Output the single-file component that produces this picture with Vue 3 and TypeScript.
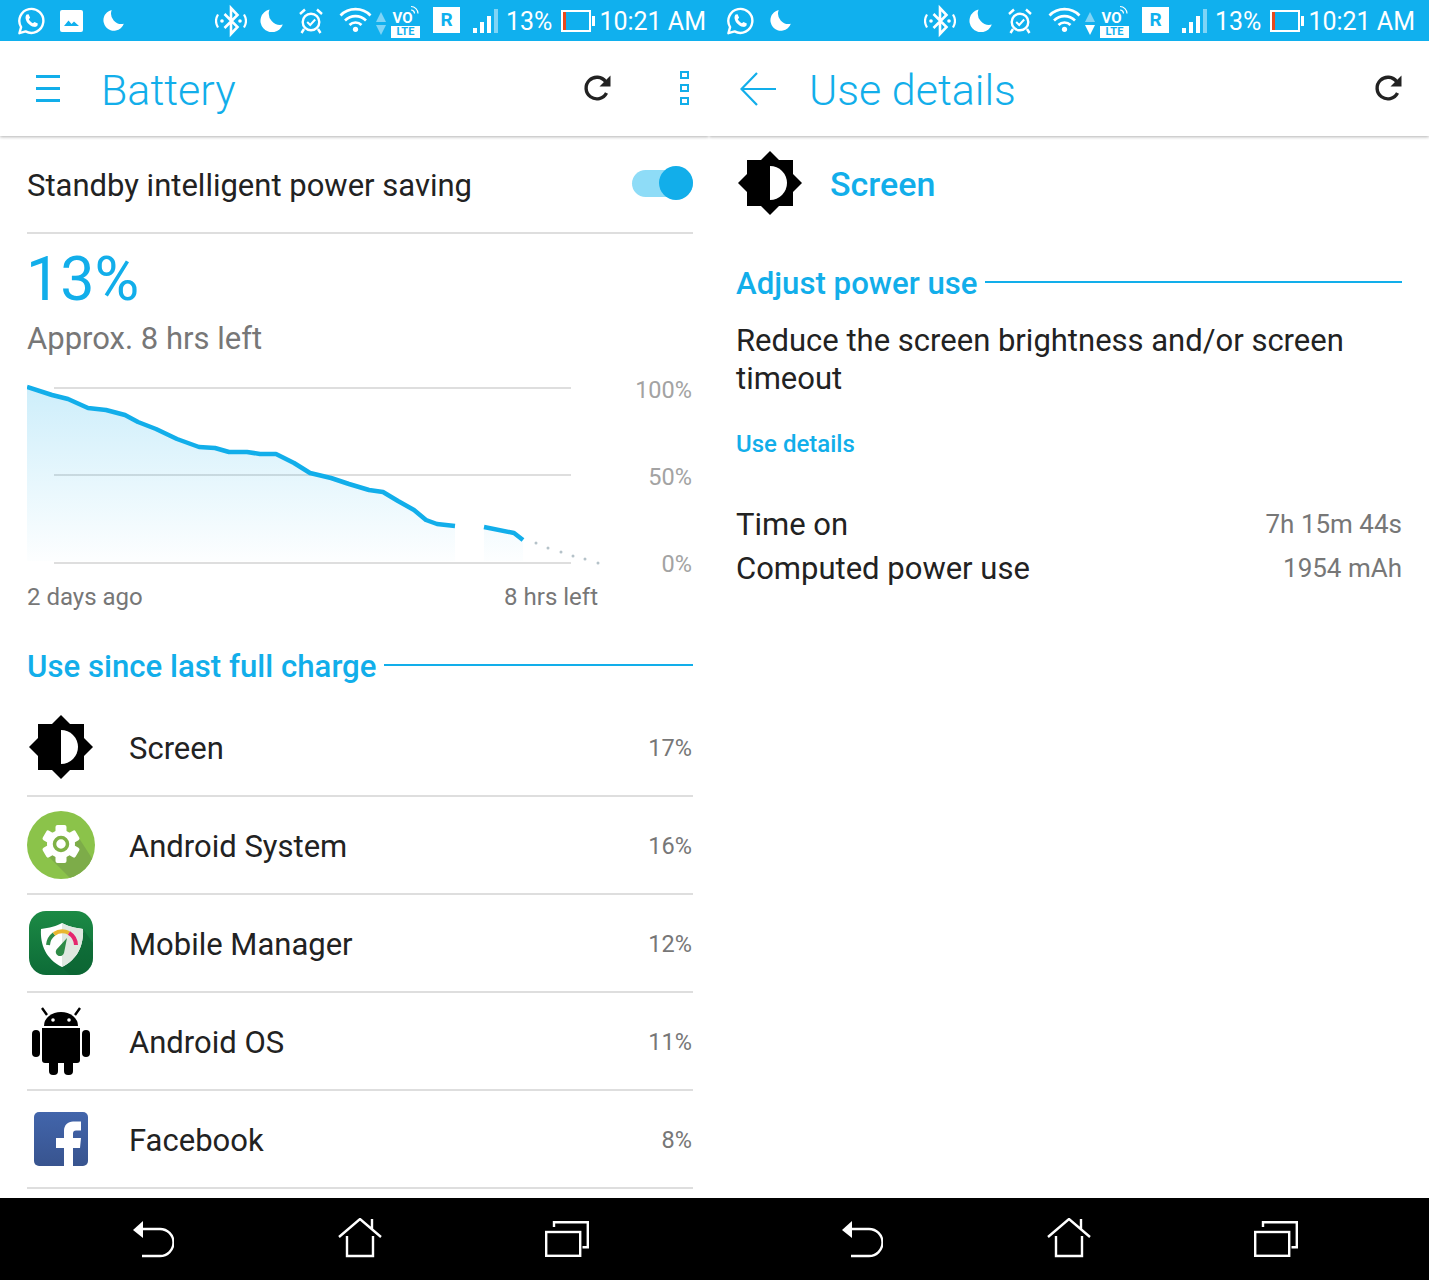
<script setup lang="ts">
interface UseRow {
  icon: string
  name: string
  pct: string
}

interface Panel {
  id: string
  title: string
  leading: string
  firstIcons: string[]
  downArrow: boolean
}

const panels: Panel[] = [
  { id: 'battery', title: 'Battery', leading: 'menu', firstIcons: ['whatsapp', 'image', 'moon'], downArrow: false },
  { id: 'details', title: 'Use details', leading: 'back', firstIcons: ['whatsapp', 'moon'], downArrow: true }
]

const rows: UseRow[] = [
  { icon: 'brightness', name: 'Screen', pct: '17%' },
  { icon: 'system', name: 'Android System', pct: '16%' },
  { icon: 'manager', name: 'Mobile Manager', pct: '12%' },
  { icon: 'droid', name: 'Android OS', pct: '11%' },
  { icon: 'facebook', name: 'Facebook', pct: '8%' }
]

// battery curve, in px of the chart box
const part1: [number, number][] = [
  [0, 7], [25, 15], [41, 19], [61, 28], [79, 30], [98, 35], [111, 42], [129, 49], [150, 59], [172, 67],
  [188, 68], [202, 72], [220, 72], [233, 74], [249, 74], [267, 83], [283, 93], [304, 98], [322, 104],
  [342, 110], [356, 112], [371, 121], [387, 130], [399, 140], [410, 144], [428, 146]
]
const part2: [number, number][] = [[457, 147], [487, 153], [496, 160]]
const dots: [number, number][] = [[509, 163], [521, 168], [534, 172], [546, 176], [558, 179], [571, 183]]

const toLine = (pts: [number, number][]) => pts.map((p) => p.join(',')).join(' ')
const toArea = (pts: [number, number][]) =>
  `${pts[0][0]},181 ${toLine(pts)} ${pts[pts.length - 1][0]},181`
</script>

<template>
  <svg class="defs" width="0" height="0" aria-hidden="true">
    <symbol id="whatsapp" viewBox="0 0 28 28">
      <path d="M2.4 26.2l1.7-6.1A12 12 0 1 1 8.6 24.4z" fill="none" stroke="#fff" stroke-width="2.4" stroke-linejoin="round" />
      <path d="M9.6 7.6l2-.3 1.5 3.4-1.3 1.6c.9 1.8 2.2 3.1 4.1 4l1.6-1.4 3.3 1.6-.3 2c-.7 1.2-2.2 1.7-3.6 1.3-4.2-1.1-7.5-4.3-8.3-8.4-.2-1.5.2-2.9 1-3.8z" fill="#fff" />
    </symbol>
    <symbol id="image" viewBox="0 0 23 22">
      <rect width="23" height="22" rx="2" fill="#fff" />
      <path d="M4 16l4.5-5.5 3 3.5 2.5-2.5L19 16z" fill="#10b0ee" />
    </symbol>
    <symbol id="moon" viewBox="0 0 23 23">
      <path d="M9.5.5A11.5 11.5 0 1 0 22.8 15.6 11.5 11.5 0 0 1 9.5.5z" fill="#fff" />
    </symbol>
    <symbol id="bt" viewBox="0 0 32 34">
      <path d="M9.5 10l13 13-6.5 7V4l6.5 7-13 13" fill="none" stroke="#fff" stroke-width="2.6" />
      <circle cx="7" cy="17" r="1.8" fill="#fff" />
      <circle cx="25" cy="17" r="1.8" fill="#fff" />
      <path d="M3 10.500q-4 6.500 0 13M29 10.500q4 6.500 0 13" fill="none" stroke="#fff" stroke-width="2.200" />
    </symbol>
    <symbol id="alarm" viewBox="0 0 24 26">
      <circle cx="12" cy="14" r="8.300" fill="none" stroke="#fff" stroke-width="2.400" />
      <path d="M8.200 14l3 3 5-5.500" fill="none" stroke="#fff" stroke-width="2" />
      <path d="M1 6l5-4.500M23 6l-5-4.500M5 21l-2.500 4M19 21l2.500 4" fill="none" stroke="#fff" stroke-width="2.400" />
    </symbol>
    <symbol id="wifi" viewBox="0 0 33 25">
      <path d="M1.500 8.500a21 21 0 0 1 30 0M6 13.500a15 15 0 0 1 21 0M10.500 18a8.500 8.500 0 0 1 12 0" fill="none" stroke="#fff" stroke-width="2.700" />
      <circle cx="16.500" cy="22.300" r="2.600" fill="#fff" />
    </symbol>
    <symbol id="refresh" viewBox="0 0 28 28">
      <path d="M22.500 19a10.800 10.800 0 1 1-.8-11.200" fill="none" stroke="#222" stroke-width="3.400" />
      <path d="M26.500 1.500v11h-11z" fill="#222" />
    </symbol>
    <symbol id="navBack" viewBox="0 0 42 38">
      <path d="M1 10l10-9v17z" fill="#fff" />
      <path d="M10 9h18a13.500 13.500 0 0 1 0 27H10" fill="none" stroke="#fff" stroke-width="2.400" />
    </symbol>
    <symbol id="navHome" viewBox="0 0 44 40">
      <path d="M1 19L22 1l21 18M34 1v11M9 18v20h26V18" fill="none" stroke="#fff" stroke-width="2.400" />
    </symbol>
    <symbol id="navRecent" viewBox="0 0 44 36">
      <rect x="1.200" y="11" width="34" height="23.800" fill="none" stroke="#fff" stroke-width="2.400" />
      <path d="M9 6V1.200h33.800v25H37.500" fill="none" stroke="#fff" stroke-width="2.400" />
    </symbol>
    <symbol id="brightness" viewBox="0 0 64 64">
      <rect x="9" y="9" width="46" height="46" fill="#000" />
      <path d="M32 0l32 32-32 32L0 32z" fill="#000" />
      <path d="M32 15a17 17 0 0 1 0 34z" fill="#fff" />
    </symbol>
    <symbol id="system" viewBox="0 0 68 68">
      <defs>
        <clipPath id="sysClip"><circle cx="34" cy="34" r="34" /></clipPath>
      </defs>
      <circle cx="34" cy="34" r="34" fill="#8bc34a" />
      <path d="M20 44l30-20 18 28v16H44z" fill="#7dac49" clip-path="url(#sysClip)" />
      <g fill="#fff">
        <circle cx="34" cy="33" r="14" />
        <rect x="28.500" y="14" width="11" height="38" rx="2" />
        <rect x="28.500" y="14" width="11" height="38" rx="2" transform="rotate(60 34 33)" />
        <rect x="28.500" y="14" width="11" height="38" rx="2" transform="rotate(120 34 33)" />
      </g>
      <circle cx="34" cy="33" r="6.500" fill="#fff" stroke="#7fb245" stroke-width="3.500" />
    </symbol>
    <symbol id="manager" viewBox="0 0 64 64">
      <defs>
        <linearGradient id="mmBg" x1="0" y1="0" x2="0" y2="1">
          <stop offset="0" stop-color="#1c8a45" />
          <stop offset="1" stop-color="#0d6b37" />
        </linearGradient>
      </defs>
      <rect width="64" height="64" rx="17" fill="url(#mmBg)" />
      <path d="M33 56L54 18l10 14v15a17 17 0 0 1-17 17H41z" fill="#0b5f31" opacity="0.45" />
      <path d="M33 12c5 3 13 5 21 6 .8 16-5 30-21 38C17 48 11 34 12 18c8-1 16-3 21-6z" fill="#fff" />
      <path d="M33 12c5 3 13 5 21 6 .8 16-5 30-21 38z" fill="#dfe8e0" />
      <path d="M19 34a15 15 0 0 1 6-11" fill="none" stroke="#2e8b47" stroke-width="4" />
      <path d="M25 23a15 15 0 0 1 15-1" fill="none" stroke="#e8b730" stroke-width="4" />
      <path d="M40 22a15 15 0 0 1 7 12" fill="none" stroke="#e5266e" stroke-width="4" />
      <path d="M38 27l-3 15a4.200 4.200 0 1 1-7.500-3.500z" fill="#2e8b47" />
    </symbol>
    <symbol id="droid" viewBox="0 0 58 68">
      <g fill="#000">
        <path d="M12 19a17 14 0 0 1 34 0z" />
        <path d="M15 8L10 1M43 8l5-7" stroke="#000" stroke-width="2.400" />
        <path d="M10 21h38v32a3 3 0 0 1-3 3H13a3 3 0 0 1-3-3z" />
        <rect x="0" y="23" width="8" height="27" rx="4" />
        <rect x="50" y="23" width="8" height="27" rx="4" />
        <rect x="17" y="50" width="9" height="18" rx="4" />
        <rect x="32" y="50" width="9" height="18" rx="4" />
      </g>
      <circle cx="21" cy="13" r="1.800" fill="#fff" />
      <circle cx="37" cy="13" r="1.800" fill="#fff" />
    </symbol>
    <symbol id="facebook" viewBox="0 0 54 54">
      <defs>
        <linearGradient id="fbBg" x1="0" y1="0" x2="0" y2="1">
          <stop offset="0" stop-color="#4265ab" />
          <stop offset="1" stop-color="#38548f" />
        </linearGradient>
      </defs>
      <rect width="54" height="54" rx="5" fill="url(#fbBg)" />
      <path d="M30 54V36h-8V26h8v-7c0-6 4-9.500 9-9.500h8v9h-5c-2 0-3 1-3 3V26h8l-1 10h-7v18z" fill="#fff" />
    </symbol>
  </svg>

  <div class="screen">
    <section v-for="p in panels" :key="p.id" class="panel" :class="'panel-' + p.id">
      <div class="status">
        <svg v-for="ic in p.firstIcons" :key="ic" class="st" :class="'st-' + ic"><use :href="'#' + ic" /></svg>
        <div class="status-right">
          <svg class="st st-bt"><use href="#bt" /></svg>
          <svg class="st st-moon2"><use href="#moon" /></svg>
          <svg class="st st-alarm"><use href="#alarm" /></svg>
          <svg class="st st-wifi"><use href="#wifi" /></svg>
          <div class="arrows">
            <i class="arrow-up"></i>
            <i class="arrow-down" :class="{ solid: p.downArrow }"></i>
          </div>
          <div class="volte">
            <svg class="vo-waves" viewBox="0 0 10 10">
              <path d="M1 1.500a7 7 0 0 1 7 7M1 5a3.500 3.500 0 0 1 3.500 3.500" fill="none" stroke="#fff" stroke-width="1.200" />
            </svg>
            <span class="vo">VO</span>
            <span class="lte">LTE</span>
          </div>
          <div class="roam">R</div>
          <div class="signal"><i></i><i></i><i></i><i></i></div>
          <span class="st-text pct">13%</span>
          <div class="batt"><i></i></div>
          <span class="st-text clock">10:21 AM</span>
        </div>
      </div>

      <header class="bar">
        <div v-if="p.leading === 'menu'" class="menu"><i></i><i></i><i></i></div>
        <svg v-else class="back" viewBox="0 0 36 34">
          <path d="M17 1L1.500 17 17 33M2 17h34" fill="none" stroke="#12aeea" stroke-width="2.200" />
        </svg>
        <h1 class="bar-title">{{ p.title }}</h1>
        <svg class="refresh"><use href="#refresh" /></svg>
        <div v-if="p.id === 'battery'" class="more"><i></i><i></i><i></i></div>
      </header>

      <main v-if="p.id === 'battery'" class="body">
        <div class="standby">
          <span>Standby intelligent power saving</span>
          <div class="toggle"><i></i></div>
        </div>
        <div class="big">13%</div>
        <div class="approx">Approx. 8 hrs left</div>

        <div class="chart">
          <svg class="plot" width="574" height="190" viewBox="0 0 574 190">
            <defs>
              <linearGradient id="area" gradientUnits="userSpaceOnUse" x1="0" y1="7" x2="0" y2="181">
                <stop offset="0" stop-color="#12aeea" stop-opacity="0.21" />
                <stop offset="1" stop-color="#12aeea" stop-opacity="0.01" />
              </linearGradient>
            </defs>
            <g stroke="#dedede" stroke-width="2">
              <line x1="27" y1="8" x2="544" y2="8" />
              <line x1="27" y1="95" x2="544" y2="95" />
              <line x1="27" y1="183" x2="544" y2="183" />
            </g>
            <polygon :points="toArea(part1)" fill="url(#area)" />
            <polygon :points="toArea(part2)" fill="url(#area)" />
            <polyline :points="toLine(part1)" fill="none" stroke="#12aeea" stroke-width="4.500" stroke-linejoin="round" />
            <polyline :points="toLine(part2)" fill="none" stroke="#12aeea" stroke-width="4.500" stroke-linejoin="round" />
            <circle v-for="d in dots" :key="d[0]" :cx="d[0]" :cy="d[1]" r="1.500" fill="#b5c2c9" />
          </svg>
          <div class="ticks">
            <span>100%</span>
            <span>50%</span>
            <span>0%</span>
          </div>
        </div>
        <div class="axis">
          <span>2 days ago</span>
          <span>8 hrs left</span>
        </div>

        <div class="section use-since">
          <span>Use since last full charge</span>
          <i></i>
        </div>

        <ul class="list">
          <li v-for="r in rows" :key="r.name" class="row">
            <div class="row-icon">
              <svg :class="'ic-' + r.icon"><use :href="'#' + r.icon" /></svg>
            </div>
            <span class="row-name">{{ r.name }}</span>
            <span class="row-pct">{{ r.pct }}</span>
          </li>
        </ul>
      </main>

      <main v-else class="body">
        <div class="app-head">
          <svg class="ic-brightness"><use href="#brightness" /></svg>
          <span>Screen</span>
        </div>
        <div class="section adjust">
          <span>Adjust power use</span>
          <i></i>
        </div>
        <p class="advice">Reduce the screen brightness and/or screen timeout</p>
        <div class="link">Use details</div>
        <div class="stat stat-first">
          <span>Time on</span>
          <b>7h 15m 44s</b>
        </div>
        <div class="stat">
          <span>Computed power use</span>
          <b>1954 mAh</b>
        </div>
      </main>

      <footer class="nav">
        <svg class="nav-back"><use href="#navBack" /></svg>
        <svg class="nav-home"><use href="#navHome" /></svg>
        <svg class="nav-recent"><use href="#navRecent" /></svg>
      </footer>
    </section>
  </div>
</template>

<style>
html,
body {
  margin: 0;
  background: #fff;
}
</style>

<style scoped>
.defs {
  position: absolute;
}

.screen {
  display: grid;
  grid-template-columns: 709px 720px;
  height: 1280px;
  overflow: hidden;
  font-family: Roboto, "Liberation Sans", sans-serif;
  color: #222;
}

.panel {
  display: flex;
  flex-direction: column;
  height: 1280px;
  min-width: 0;
}

/* status bar */
.status {
  display: flex;
  align-items: center;
  flex: none;
  height: 41px;
  padding: 0 3px 0 17px;
  background: #10b0ee;
  color: #fff;
}

.panel-details .status {
  padding-right: 14px;
}

.status-right {
  display: flex;
  align-items: center;
  margin-left: auto;
}

.st {
  display: block;
  flex: none;
}

.st-whatsapp {
  width: 28px;
  height: 28px;
}

.st-image {
  width: 23px;
  height: 22px;
  margin-left: 15px;
}

.st-moon {
  width: 21px;
  height: 22px;
  margin-left: 20px;
  margin-top: -2px;
}

.panel-details .st-moon {
  margin-left: 16px;
}

.st-bt {
  width: 32px;
  height: 34px;
}

.st-moon2 {
  width: 23px;
  height: 23px;
  margin-left: 13px;
}

.st-alarm {
  width: 24px;
  height: 26px;
  margin-left: 16px;
}

.st-wifi {
  width: 33px;
  height: 25px;
  margin-left: 16px;
  margin-top: -2px;
}

.arrows {
  display: flex;
  flex-direction: column;
  gap: 3px;
  margin-left: 4px;
  margin-top: 6px;
}

.arrow-up,
.arrow-down {
  display: block;
  width: 0;
  height: 0;
  border-left: 5px solid transparent;
  border-right: 5px solid transparent;
}

.arrow-up {
  border-bottom: 10px solid #7fd4f6;
}

.arrow-down {
  border-top: 10px solid #7fd4f6;
}

.arrow-down.solid {
  border-top-color: #fff;
}

.volte {
  position: relative;
  display: flex;
  flex-direction: column;
  align-items: center;
  width: 29px;
  margin-left: 5px;
  margin-top: 8px;
}

.vo-waves {
  position: absolute;
  top: -6px;
  right: 0;
  width: 10px;
  height: 10px;
}

.vo {
  font-size: 15px;
  font-weight: 700;
  line-height: 15px;
  margin-left: -6px;
}

.lte {
  width: 100%;
  height: 12px;
  background: #fff;
  color: #10b0ee;
  font-size: 11px;
  font-weight: 700;
  line-height: 12px;
  text-align: center;
}

.roam {
  width: 27px;
  height: 26px;
  margin-left: 13px;
  margin-top: -1px;
  background: #fff;
  color: #10b0ee;
  font-size: 19px;
  font-weight: 700;
  line-height: 26px;
  text-align: center;
}

.signal {
  display: flex;
  align-items: flex-end;
  gap: 3px;
  height: 24px;
  margin-left: 13px;
}

.signal i {
  display: block;
  width: 4px;
  background: #fff;
}

.signal i:nth-child(1) {
  height: 5px;
}

.signal i:nth-child(2) {
  height: 11px;
}

.signal i:nth-child(3) {
  height: 17px;
}

.signal i:nth-child(4) {
  height: 24px;
  background: #7fd4f6;
}

.st-text {
  margin-top: 1px;
  font-size: 25px;
  line-height: 41px;
}

.pct {
  margin-left: 8px;
}

.batt {
  position: relative;
  box-sizing: border-box;
  width: 30px;
  height: 22px;
  margin: 0 4px 0 9px;
  border: 2px solid #fff;
}

.batt i {
  display: block;
  width: 3px;
  height: 100%;
  background: #e8491d;
}

.batt::after {
  content: "";
  position: absolute;
  top: 4px;
  right: -6px;
  width: 3px;
  height: 10px;
  background: #fff;
}

.clock {
  margin-left: 4px;
}

/* toolbar */
.bar {
  display: flex;
  align-items: center;
  flex: none;
  position: relative;
  z-index: 1;
  height: 95px;
  background: #fff;
  box-shadow: 0 1px 3px rgba(0, 0, 0, 0.3);
  clip-path: inset(0 0 -6px 0);
}

.menu {
  display: flex;
  flex-direction: column;
  gap: 9px;
  width: 24px;
  margin-left: 36px;
}

.menu i {
  display: block;
  height: 3px;
  background: #12aeea;
}

.back {
  width: 36px;
  height: 34px;
  margin-left: 31px;
}

.bar-title {
  margin: 2px 0 0;
  font-size: 43px;
  font-weight: 300;
  color: #12aeea;
}

.panel-battery .bar-title {
  margin-left: 41px;
}

.panel-details .bar-title {
  margin-left: 33px;
}

.refresh {
  width: 28px;
  height: 28px;
  margin-left: auto;
  margin-top: -2px;
}

.panel-details .refresh {
  margin-right: 26px;
}

.more {
  display: flex;
  flex-direction: column;
  gap: 5px;
  margin: -2px 20px 0 68px;
}

.more i {
  display: block;
  box-sizing: border-box;
  width: 9px;
  height: 8px;
  border: 2.5px solid #12aeea;
}

/* content */
.body {
  flex: 1;
  min-height: 0;
  overflow: hidden;
  background: #fff;
}

.panel-battery .body {
  padding: 0 16px 0 27px;
}

.panel-details .body {
  padding: 0 27px;
}

.standby {
  display: flex;
  align-items: center;
  justify-content: space-between;
  box-sizing: border-box;
  height: 98px;
  border-bottom: 2px solid #dedede;
  font-size: 31px;
}

.standby span {
  margin-top: 2px;
}

.toggle {
  position: relative;
  width: 61px;
  height: 27px;
  margin-top: -2px;
  border-radius: 14px;
  background: #8edcf7;
}

.toggle i {
  position: absolute;
  top: -4px;
  right: 0;
  width: 34px;
  height: 34px;
  border-radius: 50%;
  background: #12aeea;
}

.big {
  margin-top: 8px;
  margin-left: -1px;
  font-size: 61px;
  font-weight: 400;
  line-height: 74px;
  color: #12aeea;
}

.approx {
  margin-top: 3px;
  font-size: 31px;
  line-height: 40px;
  color: #777;
}

.chart {
  display: flex;
  justify-content: space-between;
  height: 190px;
  margin-top: 21px;
}

.plot {
  display: block;
}

.ticks {
  display: flex;
  flex-direction: column;
  justify-content: space-between;
  height: 198px;
  margin: -2px 1px 0 0;
  font-size: 23.5px;
  line-height: 24px;
  text-align: right;
  color: #a3a3a3;
}

.axis {
  display: flex;
  justify-content: space-between;
  width: 571px;
  margin-top: 12px;
  font-size: 24px;
  line-height: 30px;
  color: #777;
}

.section {
  display: flex;
  align-items: center;
  gap: 7px;
  font-size: 31.2px;
  font-weight: 500;
  line-height: 40px;
  color: #12aeea;
}

.section i {
  flex: 1;
  height: 2px;
  margin-top: -4px;
  background: #12aeea;
}

.use-since {
  margin-top: 35px;
}

.list {
  margin: 12px 0 0;
  padding: 0;
  list-style: none;
}

.row {
  display: flex;
  align-items: center;
  box-sizing: border-box;
  height: 98px;
  border-bottom: 2px solid #dedede;
}

.row-icon {
  display: flex;
  align-items: center;
  justify-content: center;
  flex: none;
  width: 68px;
  margin-right: 34px;
}

.row-name {
  padding-top: 2px;
  font-size: 31px;
}

.row-pct {
  margin: 0 1px 0 auto;
  padding-top: 2px;
  font-size: 23.5px;
  color: #777;
}

.ic-brightness {
  display: block;
  width: 64px;
  height: 64px;
}

.ic-system {
  width: 68px;
  height: 68px;
}

.ic-manager {
  width: 64px;
  height: 64px;
}

.ic-droid {
  width: 58px;
  height: 68px;
}

.ic-facebook {
  width: 54px;
  height: 54px;
}

.app-head {
  display: flex;
  align-items: center;
  gap: 28px;
  height: 94px;
  padding-left: 2px;
  font-size: 34px;
  font-weight: 500;
  color: #12aeea;
}

.app-head span {
  margin-top: 2px;
}

.adjust {
  margin-top: 34px;
}

.advice {
  margin: 18px 0 0;
  font-size: 31px;
  line-height: 38px;
}

.link {
  margin-top: 31px;
  font-size: 24px;
  font-weight: 500;
  line-height: 30px;
  color: #12aeea;
}

.stat {
  display: flex;
  align-items: center;
  justify-content: space-between;
  height: 44px;
  font-size: 31px;
}

.stat b {
  font-size: 26px;
  font-weight: 400;
  color: #777;
}

.stat-first {
  margin-top: 43px;
}

/* nav bar */
.nav {
  position: relative;
  flex: none;
  height: 82px;
  background: #000;
}

.nav svg {
  position: absolute;
}

.nav-back {
  left: 132px;
  top: 22px;
  width: 42px;
  height: 38px;
}

.nav-home {
  left: 338px;
  top: 20px;
  width: 44px;
  height: 40px;
}

.nav-recent {
  left: 545px;
  top: 23px;
  width: 44px;
  height: 36px;
}
</style>
